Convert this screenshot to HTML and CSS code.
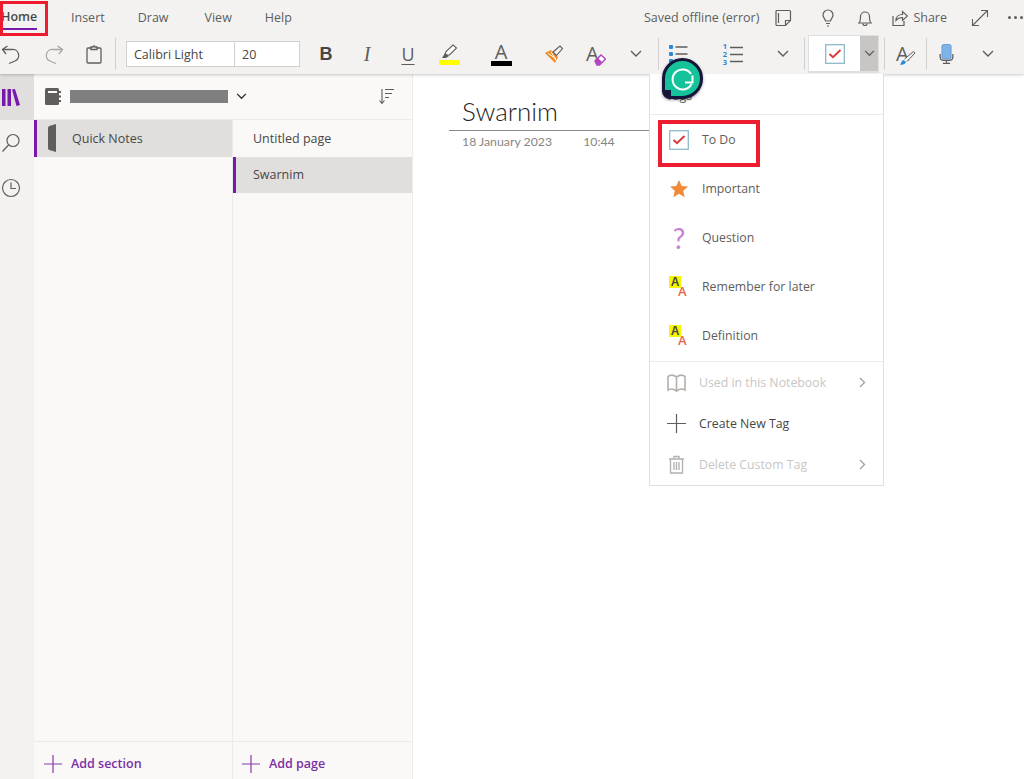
FILE: index.html
```html
<!DOCTYPE html>
<html lang="en">
<head>
<meta charset="utf-8">
<title>OneNote</title>
<link rel="stylesheet" href="styles.css">
</head>
<body>
<div class="app">
  <header class="ribbon">
    <div class="tabrow">
      <nav class="tabs">
        <span class="tab tab-home">Home</span>
        <span class="tab tab-insert">Insert</span>
        <span class="tab tab-draw">Draw</span>
        <span class="tab tab-view">View</span>
        <span class="tab tab-help">Help</span>
      </nav>
      <div class="status">
        <span class="saved">Saved offline (error)</span>
        <svg class="st-sticky" width="20" height="20" viewBox="0 0 20 20" fill="none" stroke="#605e5c" stroke-width="1.2"><path d="M3 3.500q0-1 1-1h12.500q1 0 1 1v9l-5 5H4q-1 0-1-1z"/><path d="M5.500 5v10M17.500 12.500h-5v5"/></svg>
        <svg class="st-bulb" width="20" height="20" viewBox="0 0 20 20" fill="none" stroke="#605e5c" stroke-width="1.2"><path d="M7.500 13c0-2-2.500-3-2.500-6a5 5 0 0 1 10 0c0 3-2.500 4-2.500 6z"/><path d="M8 15.500h4M9 18h2"/></svg>
        <svg class="st-bell" width="20" height="20" viewBox="0 0 20 20" fill="none" stroke="#605e5c" stroke-width="1.2"><path d="M4 15c1.500-1.500 1.500-3 1.500-6.500a4.500 4.500 0 0 1 9 0c0 3.500 0 5 1.500 6.500z"/><path d="M8 15.500a2 2 0 0 0 4 0"/></svg>
        <svg class="st-share" width="16" height="18" viewBox="0 0 16 18" fill="none" stroke="#605e5c" stroke-width="1.200"><path d="M1 7v9.500h11V12"/><path d="M4 11.500c0-4 3-6 6.500-6V2.500l5 4.500-5 4.500V8.500c-3 0-5 1-6.500 3z"/></svg>
        <span class="share">Share</span>
        <svg class="st-expand" width="18" height="18" viewBox="0 0 18 18" fill="none" stroke="#605e5c" stroke-width="1.100"><path d="M1.500 16.500l15-15M10 1.500h6.500V8M1.500 10v6.500H8"/></svg>
        <span class="dots"><i></i><i></i><i></i></span>
      </div>
    </div>
    <div class="toolbar">
      <svg width="22" height="22" viewBox="0 0 22 22" fill="none" stroke="#605e5c" stroke-width="1.300"><path d="M5 11L1.500 6.500 6.500 3"/><path d="M2 6.500h9a6 6 0 0 1 3 11.500L8 20.500"/></svg>
      <svg width="22" height="22" viewBox="0 0 22 22" fill="none" stroke="#a8a6a4" stroke-width="1.300"><path d="M17 11l3.500-4.500L15.500 3"/><path d="M20 6.500h-9a6 6 0 0 0-3 11.500l6 2.500"/></svg>
      <svg width="18" height="20" viewBox="0 0 18 20" fill="none" stroke="#605e5c" stroke-width="1.300"><rect x="2" y="4" width="14" height="15" rx="1"/><path d="M6 5.500V3h2a1 1 0 0 1 2 0h2v2.500z" fill="#f3f2f1"/></svg>
      <span class="sep"></span>
      <div class="fontbox"><span class="fontname">Calibri Light</span><span class="fontsize">20</span></div>
      <span class="g g-b">B</span>
      <span class="g g-i">I</span>
      <span class="g g-u">U</span>
      <span class="colorbtn"><svg width="20" height="16" viewBox="0 0 20 16"><path d="M6 11l1-3.500L14 1l3.500 3-7 7z" fill="#fff" stroke="#605e5c" stroke-width="1.100"/><path d="M3 14l3-5 4 3-3 2z" fill="#605e5c"/></svg><i class="swatch swatch-y"></i></span>
      <span class="colorbtn"><span class="g g-a">A</span><i class="swatch swatch-k"></i></span>
      <svg width="20" height="20" viewBox="0 0 20 20"><path d="M1 9l6-3 7 7-3 6C8 16 4 12 1 9z" fill="#f08a24"/><path d="M4 9.500l8 5M7 7.500l5 9" stroke="#fff" stroke-width="1"/><path d="M9 8l7-6 2.500 2.500-6 7z" fill="#f3f2f1" stroke="#605e5c" stroke-width="1.100"/></svg>
      <span class="aerase"><span class="g g-a">A</span><svg class="erase" width="12" height="12" viewBox="0 0 12 12"><path d="M1 7l6-6 4.500 4-6 6H3z" fill="#fff" stroke="#b146c2" stroke-width="1.500"/><path d="M1 7l3-3 4 4-3 3H3z" fill="#b146c2"/></svg></span>
      <svg class="chev" width="12" height="8" viewBox="0 0 12 8" fill="none" stroke="#605e5c" stroke-width="1.400"><path d="M1 1l5 5 5-5"/></svg>
      <span class="sep"></span>
      <svg width="20" height="22" viewBox="0 0 20 22"><g fill="#2b88d8"><rect x="1" y="2" width="4" height="4" rx="1"/><rect x="1" y="9" width="4" height="4" rx="1"/><rect x="1" y="16" width="4" height="4" rx="1"/></g><path d="M7.500 4h12M7.500 11h12M7.500 18h12" stroke="#605e5c" stroke-width="1.300"/></svg>
      <span class="numlist"><span class="nums">1<br>2<br>3</span><svg width="13" height="19" viewBox="0 0 13 19"><path d="M0 2.500h13M0 9.500h13M0 16.500h13" stroke="#605e5c" stroke-width="1.300"/></svg></span>
      <svg class="chev" width="12" height="8" viewBox="0 0 12 8" fill="none" stroke="#605e5c" stroke-width="1.400"><path d="M1 1l5 5 5-5"/></svg>
      <span class="sep sep-a"></span>
      <div class="tagbox">
        <span class="tagmain"><svg width="20" height="20" viewBox="0 0 20 20"><rect x=".7" y=".7" width="18.600" height="18.600" fill="#fff" stroke="#8dbacb" stroke-width="1.300"/><path d="M4.500 10l3.500 3.200L15.500 6" fill="none" stroke="#d83b3b" stroke-width="2"/></svg></span>
        <span class="tagdrop"><svg width="11" height="7" viewBox="0 0 12 8" fill="none" stroke="#605e5c" stroke-width="1.500"><path d="M1 1l5 5 5-5"/></svg></span>
      </div>
      <span class="sep sep-b"></span>
      <span class="apen"><span class="g g-a">A</span><svg class="pen" width="17" height="14" viewBox="0 0 17 14"><path d="M1 13.500c3 .8 5-.5 6-2.500L4.500 9C2.500 9.800 2.500 12 1 13.500z" fill="#2b88d8"/><path d="M5.500 8l9-7.500 1.500 1.500-8 8.500" fill="#f3f2f1" stroke="#605e5c"/></svg></span>
      <span class="sep"></span>
      <svg width="15" height="20" viewBox="0 0 16 22"><rect x="3" y="0.500" width="10" height="16" rx="2" fill="#7fb4e6" stroke="#5a96cf"/><path d="M1 11v3q0 4 4 4h6q4 0 4-4v-3M8 18v3M4 21.300h8" fill="none" stroke="#605e5c" stroke-width="1.400"/></svg>
      <svg class="chev" width="12" height="8" viewBox="0 0 12 8" fill="none" stroke="#605e5c" stroke-width="1.400"><path d="M1 1l5 5 5-5"/></svg>
    </div>
  </header>

  <main class="workspace">
    <aside class="rail">
      <div class="rail-item rail-active"><svg width="20" height="17" viewBox="0 0 20 17"><path d="M1 0h3.500v17H1zM6.500 0H10v17H6.500zM11 .5L14 0l5 16-3.500 1z" fill="#7719aa"/></svg></div>
      <div class="rail-item"><svg width="20" height="20" viewBox="0 0 20 20" fill="none" stroke="#605e5c" stroke-width="1.200"><circle cx="12" cy="7.500" r="6"/><path d="M7.500 12L1.500 18.500"/></svg></div>
      <div class="rail-item"><svg width="20" height="20" viewBox="0 0 20 20" fill="none" stroke="#605e5c" stroke-width="1.200"><circle cx="10" cy="10" r="8.500"/><path d="M10 4.500V10.500H15"/></svg></div>
    </aside>

    <div class="nav">
      <div class="nb-head">
        <svg class="nb-icon" width="17" height="17" viewBox="0 0 17 17"><rect x="0" y="0" width="14" height="17" rx="1.500" fill="#605e5c"/><rect x="3" y="3" width="9" height="2" fill="#faf9f8"/><path d="M14 3h2v2h-2zM14 7.500h2v2h-2zM14 12h2v2h-2z" fill="#605e5c"/></svg>
        <span class="nb-name"></span>
        <svg class="nb-chev" width="11" height="7" viewBox="0 0 12 8" fill="none" stroke="#323130" stroke-width="1.600"><path d="M1 1l5 5 5-5"/></svg>
        <svg class="nb-sort" width="16" height="17" viewBox="0 0 16 17" fill="none" stroke="#605e5c" stroke-width="1.100"><path d="M3 1v14M.5 12.500L3 15.500l2.500-3M6 1.500h9M6 5.500h7M6 9.500h4"/></svg>
      </div>
      <div class="nav-cols">
        <section class="sections">
          <div class="row row-section row-active"><svg width="9" height="28" viewBox="0 0 9 28"><path d="M8 0v28L3 26.500Q0 26 0 24V4Q0 2 3 1.500z" fill="#605e5c"/></svg><span>Quick Notes</span></div>
          <div class="foot foot-section"><svg width="18" height="18" viewBox="0 0 18 18"><path d="M9 0v18M0 9h18" stroke="#8a3aae" stroke-width="1.200"/></svg><span>Add section</span></div>
        </section>
        <section class="pages">
          <div class="row row-page">Untitled page</div>
          <div class="row row-page row-active">Swarnim</div>
          <div class="foot"><svg width="18" height="18" viewBox="0 0 18 18"><path d="M9 0v18M0 9h18" stroke="#8a3aae" stroke-width="1.200"/></svg><span>Add page</span></div>
        </section>
      </div>
    </div>

    <article class="canvas">
      <h1 class="title">Swarnim</h1>
      <div class="meta"><span>18 January 2023</span><span>10:44</span></div>
    </article>
  </main>
</div>

<div class="menu">
  <div class="menu-head">Tags</div>
  <ul class="tags">
    <li><svg width="20" height="20" viewBox="0 0 20 20"><rect x=".7" y=".7" width="18.600" height="18.600" fill="#fff" stroke="#8dbacb" stroke-width="1.300"/><path d="M4.500 10l3.500 3.200L15.500 6" fill="none" stroke="#d83b3b" stroke-width="2"/></svg><span>To Do</span></li>
    <li><svg width="20" height="20" viewBox="0 0 20 20"><path d="M10 1l2.700 6 6.300.6-4.800 4.200 1.500 6.400L10 14.800l-5.700 3.400 1.500-6.400L1 7.600 7.300 7z" fill="#f08a38"/></svg><span>Important</span></li>
    <li><span class="ic-q">?</span><span>Question</span></li>
    <li><span class="ic-aa"><b>A</b><em>A</em></span><span>Remember for later</span></li>
    <li><span class="ic-aa"><b>A</b><em>A</em></span><span>Definition</span></li>
  </ul>
  <ul class="actions">
    <li class="off"><svg width="19" height="18" viewBox="0 0 19 18" fill="none" stroke="#b3b0ad" stroke-width="1.600"><path d="M1 2.500Q5-.5 9.500 3v14Q5 13.500 1 16zM18 2.500Q14-.5 9.500 3v14q4.500-3.500 8.500-1z"/></svg><span>Used in this Notebook</span><svg class="more" width="7" height="11" viewBox="0 0 7 11" fill="none" stroke="#a19f9d" stroke-width="1.300"><path d="M1 1l4.500 4.500L1 10"/></svg></li>
    <li><svg width="19" height="19" viewBox="0 0 19 19"><path d="M9.500 0v19M0 9.500h19" stroke="#605e5c" stroke-width="1.200"/></svg><span>Create New Tag</span></li>
    <li class="off"><svg width="19" height="19" viewBox="0 0 19 19" fill="none" stroke="#b3b0ad" stroke-width="1.300"><path d="M2 4h15M7 4V1.500h5V4M3.500 4v14h12V4M7 7v8M9.500 7v8M12 7v8"/></svg><span>Delete Custom Tag</span><svg class="more" width="7" height="11" viewBox="0 0 7 11" fill="none" stroke="#a19f9d" stroke-width="1.300"><path d="M1 1l4.500 4.500L1 10"/></svg></li>
  </ul>
</div>

<div class="grammarly">
  <svg width="24" height="24" viewBox="0 0 24 24" fill="none" stroke="#fff" stroke-width="2"><path d="M20 7A10 10 0 1 0 20.500 17"/><path d="M14 15.500h7.500V8.500"/></svg>
  <span class="grip"></span>
</div>
<div class="mark mark-home"></div>
<div class="mark mark-todo"></div>
</body>
</html>
```

FILE: styles.css
```css
* { box-sizing: border-box; }
html, body { margin: 0; height: 100%; overflow: hidden; background: #fff; }
body { font-family: "Open Sans", "Liberation Sans", sans-serif; color: #323130; position: relative; }
.app { display: flex; flex-direction: column; height: 779px; }

.ribbon { height: 74px; background: #f3f2f1; box-shadow: 0 1px 3px rgba(0,0,0,.22); position: relative; z-index: 2; flex: none; }
.tabrow { height: 35px; display: flex; justify-content: space-between; align-items: center; }
.tabs { display: flex; height: 35px; align-items: center; padding-left: 1px; }
.tab { font-size: 12.500px; color: #605e5c; }
.tab-home { font-weight: 600; color: #4a4846; height: 35px; line-height: 34px; width: 36px; position: relative; }
.tab-home::after { content: ""; position: absolute; left: 0; right: 0; bottom: 5px; height: 2px; background: #7719aa; }
.tab-insert { margin-left: 34px; }
.tab-draw { margin-left: 33px; }
.tab-view { margin-left: 36px; }
.tab-help { margin-left: 33px; }

.status { display: flex; align-items: center; font-size: 12.500px; color: #605e5c; width: 380px; height: 35px; white-space: nowrap; }
.st-sticky { margin-left: 14px; flex: none; }
.st-bulb { margin-left: 25px; flex: none; }
.st-bell { margin-left: 17px; flex: none; }
.st-share { margin-left: 17px; flex: none; }
.share { margin-left: 5px; }
.st-expand { margin-left: 24px; flex: none; }
.dots { display: flex; gap: 3px; margin-left: 19px; }
.dots i { width: 3px; height: 3px; border-radius: 50%; background: #605e5c; }

.toolbar { display: grid; height: 38px; align-items: center; justify-items: center;
  grid-template-columns: 24px 58px 24px 18px 178px 48px 34px 48px 34px 70px 36px 48px 32px 12px 28px 82px 18px 16px 71px 14px 26px 14px 26px 58px; }
.sep { width: 1px; height: 32px; background: #d2d0ce; }
.sep-a { justify-self: start; margin-left: 12px; }
.sep-b { justify-self: start; margin-left: 5px; }
.fontbox { display: flex; width: 174px; height: 26px; background: #fff; border: 1px solid #d2d0ce; font-size: 12.500px; color: #484644; }
.fontname { width: 108px; padding-left: 7px; line-height: 25px; border-right: 1px solid #d2d0ce; }
.fontsize { padding-left: 7px; line-height: 25px; }
.g { color: #605e5c; line-height: 1; display: block; font-family: "Liberation Sans", sans-serif; }
.g-b { font-size: 18px; font-weight: 700; color: #484644; }
.g-i { font-size: 20px; font-style: italic; font-family: "Liberation Serif", serif; }
.g-u { font-size: 18px; text-decoration: underline; text-decoration-thickness: 1px; text-underline-offset: 3px; font-family: "Open Sans", sans-serif; }
.g-a { font-size: 20px; line-height: 18px; font-family: "Open Sans", sans-serif; }
.colorbtn { display: flex; flex-direction: column; align-items: center; width: 21px; }
.swatch { display: block; width: 21px; height: 5px; }
.swatch-y { background: #ffff00; }
.swatch-k { background: #000; }
.aerase, .apen { position: relative; display: block; width: 20px; height: 22px; padding-top: 2px; }
.erase { position: absolute; left: 8px; top: 11px; }
.pen { position: absolute; left: 3px; top: 8px; }
.numlist { display: flex; align-items: center; gap: 3px; }
.nums { font-size: 7.500px; line-height: 8px; font-weight: 700; color: #2b88d8; }
.tagbox { display: flex; width: 71px; height: 38px; align-self: start; border: 1px solid #e1dfdd; border-bottom-width: 2px; background: #fff; }
.tagmain { width: 51px; display: flex; align-items: center; justify-content: center; }
.tagdrop { flex: 1; background: #c8c6c4; display: flex; align-items: center; justify-content: center; }

.workspace { flex: 1; display: flex; min-height: 0; }
.rail { width: 34px; background: #f3f2f1; flex: none; display: flex; flex-direction: column; }
.rail-item { height: 45px; display: flex; align-items: center; padding-left: 1px; }
.rail-active { height: 46px; background: #e1dfdd; }

.nav { width: 379px; flex: none; display: flex; flex-direction: column; background: #faf9f8; border-right: 1px solid #edebe9; }
.nb-head { height: 46px; flex: none; display: flex; align-items: center; padding: 0 17px 0 11px; border-bottom: 1px solid #edebe9; }
.nb-icon, .nb-chev, .nb-sort { flex: none; }
.nb-name { flex: none; width: 158px; height: 13px; background: #7f7f7f; margin-left: 8px; margin-right: 8px; }
.nb-sort { margin-left: auto; }
.nav-cols { flex: 1; display: flex; min-height: 0; }
.sections, .pages { display: flex; flex-direction: column; flex: none; }
.sections { width: 199px; border-right: 1px solid #edebe9; }
.pages { width: 179px; }
.row { height: 36.500px; flex: none; display: flex; align-items: center; font-size: 12.500px; color: #484644; border-left: 3px solid transparent; }
.row-section { padding-left: 11px; gap: 15px; }
.row-page { padding-left: 17px; }
.row-active { background: #e1dfdd; border-left-color: #7719aa; }
.foot { margin-top: auto; height: 38px; flex: none; display: flex; align-items: center; padding: 6px 0 0 9px; gap: 9px; border-top: 1px solid #edebe9; font-size: 12.500px; font-weight: 600; color: #7c2fa5; }
.foot-section { padding-left: 10px; }

.canvas { flex: 1; background: #fff; padding: 18px 0 0 49px; }
.title { margin: 0; font-family: Lato, sans-serif; font-weight: 300; font-size: 26px; line-height: 38px; color: #252423; }
.meta { width: 200px; margin-left: -13px; padding: 2px 0 0 13px; border-top: 1px solid #8a8886; display: flex; gap: 31px; font-family: Lato, sans-serif; font-size: 12.300px; line-height: 18px; color: #888684; }

.menu { position: absolute; left: 649px; top: 74px; width: 235px; height: 412px; background: #fff; border: 1px solid #e1dfdd; border-top: 0; z-index: 3; font-size: 12.300px; color: #605e5c; }
.menu-head { height: 41px; padding: 13px 0 0 16px; border-bottom: 1px solid #edebe9; }
ul { list-style: none; margin: 0; padding: 0; }
.tags { height: 247px; border-bottom: 1px solid #edebe9; }
.tags li { height: 49px; display: flex; align-items: center; padding-left: 19px; }
.tags li > :first-child { width: 20px; flex: none; }
.tags li > span:last-child { margin-left: 13px; }
.ic-q { font-family: Lato, sans-serif; font-size: 28px; color: #c77fd6; text-align: center; line-height: 1; }
.ic-aa { position: relative; display: block; height: 22px; font-style: normal; }
.ic-aa b { position: absolute; left: 0; top: 0; width: 12px; height: 12px; background: #f7f700; font-family: "Liberation Sans", sans-serif; font-size: 12px; line-height: 12px; text-align: center; color: #484644; }
.ic-aa em { position: absolute; left: 9px; top: 9px; font-family: "Open Sans", sans-serif; font-style: normal; font-weight: 600; font-size: 13px; line-height: 13px; color: #e8684a; }
.actions li { height: 41px; display: flex; align-items: center; padding-left: 17px; gap: 13px; color: #484644; }
.actions li.off { color: #c8c6c4; }
.actions li .more { margin-left: auto; margin-right: 17px; }

.grammarly { position: absolute; left: 662px; top: 58px; width: 41px; height: 41px; border-radius: 50% 50% 50% 8px; background: #15c39a; border: 3px solid #14163a; z-index: 4; display: flex; align-items: center; justify-content: center; box-shadow: 0 1px 3px rgba(0,0,0,.4); }
.grip { position: absolute; left: 0; bottom: 0; width: 6px; height: 6px; background: #14163a; }
.mark { position: absolute; border: 3px solid #ed1c2e; z-index: 5; }
.mark-home { left: 0; top: 1px; width: 48px; height: 35px; }
.mark-todo { left: 658px; top: 120px; width: 102px; height: 47px; border-width: 4px; }
```
